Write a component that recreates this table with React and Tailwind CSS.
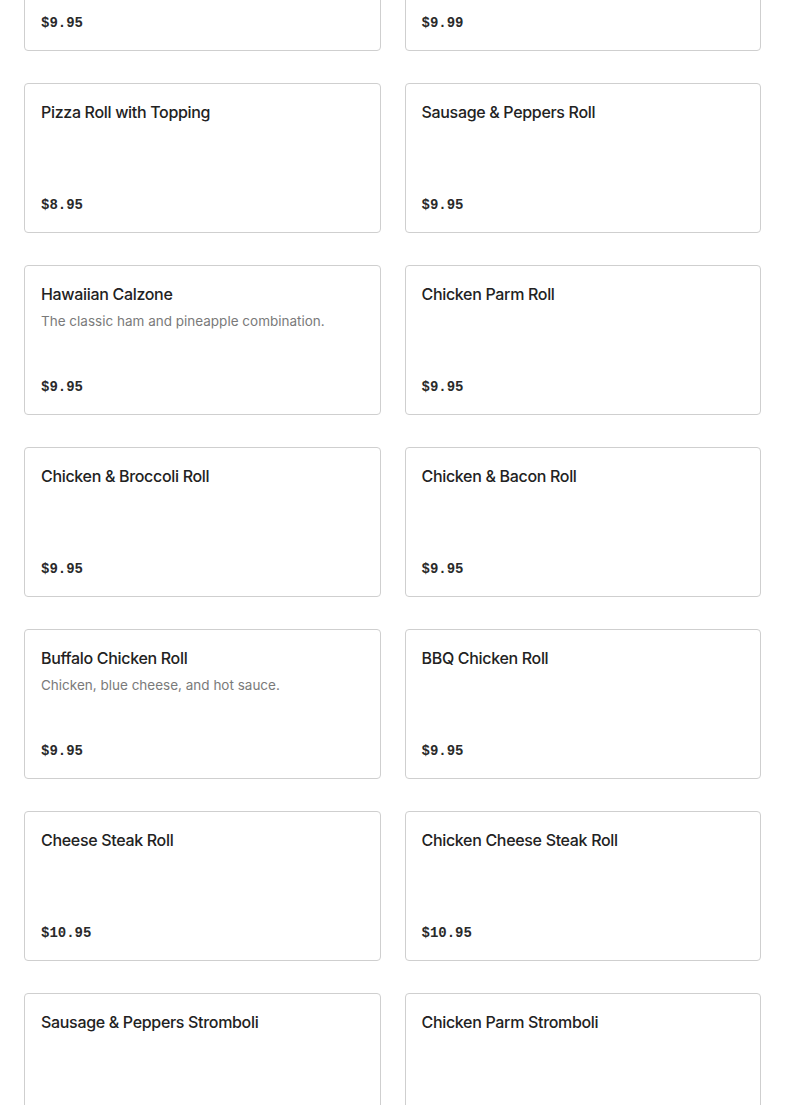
const items = [
    { name: "Pepperoni Roll", price: "$9.95" },
    { name: "Meatball Roll", price: "$9.99" },
    { name: "Pizza Roll with Topping", price: "$8.95" },
    { name: "Sausage & Peppers Roll", price: "$9.95" },
    { name: "Hawaiian Calzone", desc: "The classic ham and pineapple combination.", price: "$9.95" },
    { name: "Chicken Parm Roll", price: "$9.95" },
    { name: "Chicken & Broccoli Roll", price: "$9.95" },
    { name: "Chicken & Bacon Roll", price: "$9.95" },
    { name: "Buffalo Chicken Roll", desc: "Chicken, blue cheese, and hot sauce.", price: "$9.95" },
    { name: "BBQ Chicken Roll", price: "$9.95" },
    { name: "Cheese Steak Roll", price: "$10.95" },
    { name: "Chicken Cheese Steak Roll", price: "$10.95" },
    { name: "Sausage & Peppers Stromboli", price: "$10.95" },
    { name: "Chicken Parm Stromboli", price: "$10.95" },
];

function MenuCard({ item }) {
    return (
        <div className="flex h-[150px] flex-col justify-between rounded border border-[#cfcfcf] bg-white px-4 pt-[16px] pb-[17px]">
            <div>
                <h3 className="text-[16px] leading-6 font-medium tracking-[-0.02em] text-[#222]">
                    {item.name}
                </h3>
                {item.desc && (
                    <p className="mt-[5px] text-[13.5px] leading-5 text-[#7a7a7a]">
                        {item.desc}
                    </p>
                )}
            </div>
            <p className="font-['Liberation_Mono',monospace] text-[14px] leading-5 font-bold text-[#2a2a2a]">
                {item.price}
            </p>
        </div>
    );
}

export default function App() {
    return (
        <div className="h-[1105px] overflow-hidden bg-white font-['Inter',sans-serif]">
            <div className="mt-[-99px] grid grid-cols-2 gap-x-6 gap-y-8 px-6">
                {items.map((item, i) => (
                    <MenuCard key={i} item={item} />
                ))}
            </div>
        </div>
    );
}
